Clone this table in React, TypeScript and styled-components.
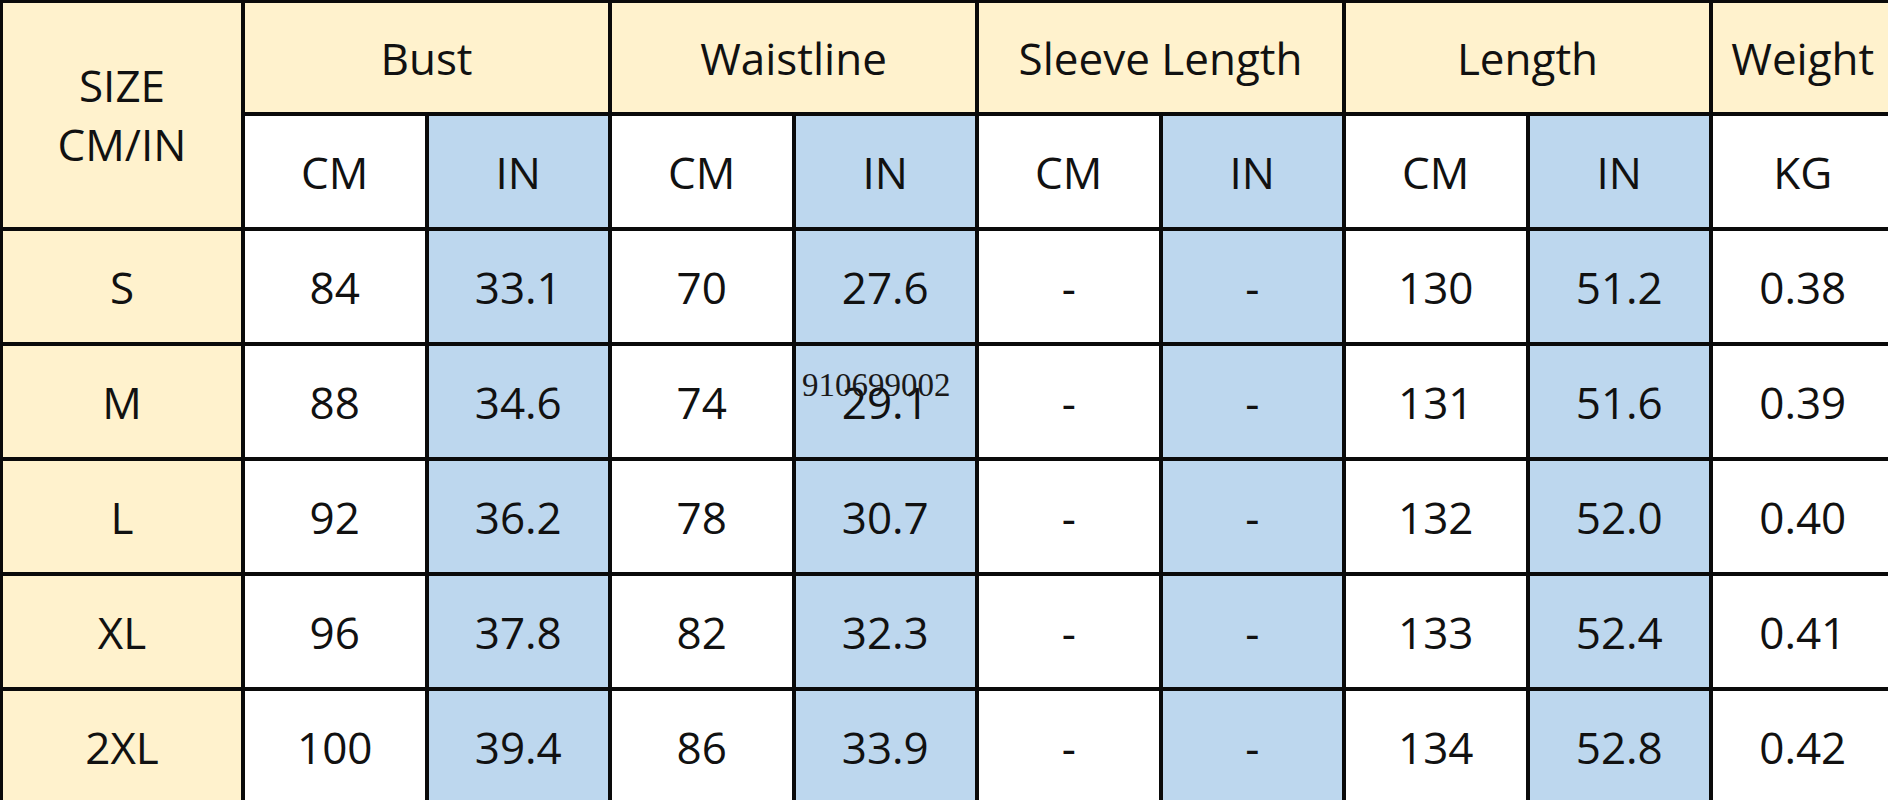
import styled, { createGlobalStyle } from "styled-components";

const GlobalStyle = createGlobalStyle`
  html, body {
    margin: 0;
    padding: 0;
    background: #fff;
    overflow: hidden;
  }
  * {
    box-sizing: border-box;
  }
`;

type Tone = "head" | "cm" | "in";

const groups = ["Bust", "Waistline", "Sleeve Length", "Length"];

const rows = [
  { size: "S", values: ["84", "33.1", "70", "27.6", "-", "-", "130", "51.2", "0.38"] },
  { size: "M", values: ["88", "34.6", "74", "29.1", "-", "-", "131", "51.6", "0.39"] },
  { size: "L", values: ["92", "36.2", "78", "30.7", "-", "-", "132", "52.0", "0.40"] },
  { size: "XL", values: ["96", "37.8", "82", "32.3", "-", "-", "133", "52.4", "0.41"] },
  { size: "2XL", values: ["100", "39.4", "86", "33.9", "-", "-", "134", "52.8", "0.42"] },
];

const colors: Record<Tone, string> = {
  head: "#fff2cd",
  cm: "#ffffff",
  in: "#bdd7ee",
};

// tone of a data column: even = CM (white), odd = IN (blue), last = KG (white)
const toneFor = (idx: number): Tone => (idx < 8 && idx % 2 === 1 ? "in" : "cm");

export default function App() {
  return (
    <>
      <GlobalStyle />
      <Page>
        <Table>
          <Cell $tone="head" $rowSpan={2}>
            <SizeLabel>
              SIZE
              <br />
              CM/IN
            </SizeLabel>
          </Cell>
          {groups.map((g) => (
            <Cell key={g} $tone="head" $colSpan={2}>
              {g}
            </Cell>
          ))}
          <Cell $tone="head">Weight</Cell>

          {[0, 1, 2, 3].map((i) => [
            <Cell key={`cm${i}`} $tone="cm">
              CM
            </Cell>,
            <Cell key={`in${i}`} $tone="in">
              IN
            </Cell>,
          ])}
          <Cell $tone="cm">KG</Cell>

          {rows.map((row) => [
            <Cell key={row.size} $tone="head">
              {row.size}
            </Cell>,
            ...row.values.map((v, idx) => (
              <Cell key={`${row.size}-${idx}`} $tone={toneFor(idx)}>
                {v}
              </Cell>
            )),
          ])}
        </Table>
        <Watermark>910699002</Watermark>
      </Page>
    </>
  );
}

const Page = styled.div`
  position: relative;
  width: 1888px;
  height: 800px;
  overflow: hidden;
`;

const Table = styled.div`
  display: grid;
  grid-template-columns: 238px repeat(9, 179.5px);
  grid-template-rows: 109px repeat(6, 111px);
  gap: 4px;
  padding: 3px 0 0 3px;
  width: 1896px;
  background: #0a0a0a;
  font-family: "Open Sans", "Noto Sans", sans-serif;
  font-size: 44px;
  color: #111;
`;

const Cell = styled.div<{ $tone: Tone; $rowSpan?: number; $colSpan?: number }>`
  display: flex;
  align-items: center;
  justify-content: center;
  text-align: center;
  white-space: nowrap;
  background: ${(p) => colors[p.$tone]};
  grid-row: span ${(p) => p.$rowSpan ?? 1};
  grid-column: span ${(p) => p.$colSpan ?? 1};
`;

const SizeLabel = styled.div`
  line-height: 59px;
`;

const Watermark = styled.div`
  position: absolute;
  left: 802px;
  top: 369px;
  font-family: "Liberation Serif", "Times New Roman", serif;
  font-size: 33px;
  line-height: 1;
  color: #1a1a1a;
  pointer-events: none;
`;
